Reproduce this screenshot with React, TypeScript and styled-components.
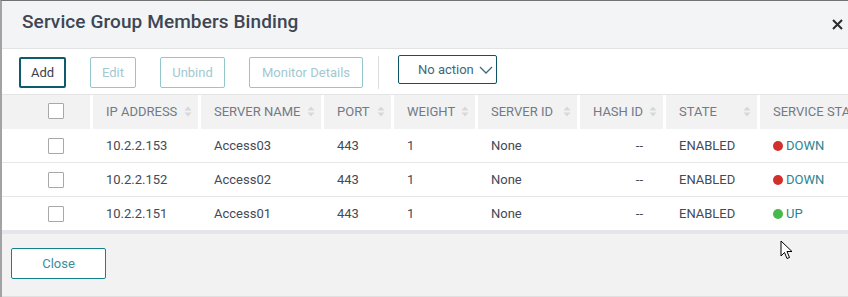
import styled, { createGlobalStyle } from "styled-components";

const GlobalStyle = createGlobalStyle`
  html, body {
    margin: 0;
    padding: 0;
    background: #ffffff;
  }
  body {
    font-family: Roboto, "Liberation Sans", sans-serif;
  }
`;

const COLS = "88px 108px 123px 70px 84px 102px 86px 94px 1fr";

const Dialog = styled.div`
  position: relative;
  width: 848px;
  height: 297px;
  box-sizing: border-box;
  border-top: 1px solid #727272;
  border-left: 2px solid #a3a3a3;
  overflow: hidden;
  display: flex;
  flex-direction: column;
  background: #fff;
`;

const Header = styled.div`
  height: 48px;
  flex: none;
  background: #f3f4f5;
  border-bottom: 1px solid #e2e3e5;
  display: flex;
  align-items: center;
  justify-content: space-between;
  padding: 0 4px 0 20px;
  box-sizing: border-box;
`;

const Title = styled.h1`
  margin: 0 0 7px;
  font-size: 19px;
  font-weight: 500;
  color: #3d4654;
  letter-spacing: 0.1px;
`;

const CloseX = styled.button`
  border: 0;
  background: none;
  padding: 0;
  width: 14px;
  height: 14px;
  display: flex;
  align-items: center;
  justify-content: center;
  cursor: pointer;
`;

const Toolbar = styled.div`
  height: 46px;
  flex: none;
  display: flex;
  align-items: center;
  padding: 2px 0 0 17px;
  box-sizing: border-box;
  border-bottom: 1px solid #e4e4e4;
`;

const ToolButton = styled.button<{ $active?: boolean; $w: number }>`
  width: ${({ $w }) => $w}px;
  height: 31px;
  margin-right: 24px;
  box-sizing: border-box;
  background: #fff;
  border-radius: 2px;
  font-family: Roboto, "Liberation Sans", sans-serif;
  font-size: 13px;
  padding: 0;
  border: ${({ $active }) => ($active ? "2px solid #0e5c6b" : "1px solid #94c6ce")};
  color: ${({ $active }) => ($active ? "#3a404a" : "#a3c8cf")};
`;

const Divider = styled.div`
  width: 1px;
  height: 33px;
  background: #dcdcdc;
  margin: 0 19px 0 -9px;
`;

const ActionSelect = styled.button`
  width: 99px;
  height: 29px;
  margin-top: -6px;
  box-sizing: border-box;
  border: 1.5px solid #0c5565;
  border-radius: 2px;
  background: #fff;
  display: flex;
  align-items: center;
  justify-content: flex-start;
  gap: 5px;
  font-family: Roboto, "Liberation Sans", sans-serif;
  font-size: 13px;
  color: #3a6a7b;
  padding: 0 0 0 19px;
`;

const Table = styled.div`
  flex: none;
  border-bottom: 4px solid #e4e6e9;
`;

const Row = styled.div<{ $head?: boolean }>`
  display: grid;
  grid-template-columns: ${COLS};
  height: ${({ $head }) => ($head ? "34px" : "33px")};
  border-bottom: ${({ $head }) => ($head ? "none" : "1px solid #e6e7e8")};
  background: #fff;
  &:last-child {
    border-bottom: none;
  }
`;

const HeadCell = styled.div<{ $first?: boolean }>`
  background: #f2f2f2;
  border-left: ${({ $first }) => ($first ? "none" : "3px solid #fff")};
  display: flex;
  align-items: center;
  justify-content: space-between;
  padding: 0 6px 2px 13px;
  font-size: 13px;
  color: #737a86;
  white-space: nowrap;
  overflow: hidden;
`;

const Cell = styled.div<{ $right?: boolean }>`
  display: flex;
  align-items: center;
  justify-content: ${({ $right }) => ($right ? "flex-end" : "flex-start")};
  padding: 0 ${({ $right }) => ($right ? "20px" : "0")} 0 16px;
  font-size: 13px;
  color: #434a55;
  white-space: nowrap;
`;

const CheckCell = styled.div<{ $head?: boolean }>`
  display: flex;
  align-items: center;
  padding-left: 46px;
  padding-bottom: ${({ $head }) => ($head ? "2px" : "0")};
  background: ${({ $head }) => ($head ? "#f2f2f2" : "transparent")};
`;

const Check = styled.span`
  width: 16px;
  height: 16px;
  box-sizing: border-box;
  border: 1px solid #a8a8a8;
  border-radius: 1px;
  background: #fff;
`;

const Status = styled.span<{ $up?: boolean }>`
  display: inline-flex;
  align-items: center;
  gap: 3px;
  color: #2a8593;
  &::before {
    content: "";
    width: 10px;
    height: 10px;
    border-radius: 50%;
    background: ${({ $up }) => ($up ? "#46b94d" : "#d2302c")};
  }
`;

const Footer = styled.div`
  flex: 1;
  background: #f2f2f2;
  border-bottom: 1px solid #e0e0e0;
  display: flex;
  align-items: center;
  padding: 0 0 4px 9px;
`;

const CloseButton = styled.button`
  width: 95px;
  height: 31px;
  box-sizing: border-box;
  border: 1.5px solid #17808d;
  border-radius: 2px;
  background: #fff;
  font-family: Roboto, "Liberation Sans", sans-serif;
  font-size: 13px;
  color: #3a8f9b;
`;

const Pointer = styled.svg`
  position: absolute;
  left: 778px;
  top: 239px;
`;

function SortIcon() {
  return (
    <svg width="8" height="11" viewBox="0 0 8 11">
      <path d="M4 0.5 L7.5 4.5 H0.5 Z" fill="#d6d8db" />
      <path d="M4 10.5 L7.5 6.5 H0.5 Z" fill="#d6d8db" />
    </svg>
  );
}

const headers = [
  { label: "IP ADDRESS", sort: true },
  { label: "SERVER NAME", sort: true },
  { label: "PORT", sort: true },
  { label: "WEIGHT", sort: true },
  { label: "SERVER ID", sort: true },
  { label: "HASH ID", sort: true },
  { label: "STATE", sort: true },
  { label: "SERVICE STATE", sort: false },
];

const rows = [
  { ip: "10.2.2.153", name: "Access03", up: false },
  { ip: "10.2.2.152", name: "Access02", up: false },
  { ip: "10.2.2.151", name: "Access01", up: true },
];

export default function App() {
  return (
    <>
      <GlobalStyle />
      <Dialog>
        <Header>
          <Title>Service Group Members Binding</Title>
          <CloseX aria-label="close">
            <svg width="11" height="11" viewBox="0 0 11 11">
              <path d="M1 1 L10 10 M10 1 L1 10" stroke="#2b2b2b" strokeWidth="2" />
            </svg>
          </CloseX>
        </Header>
        <Toolbar>
          <ToolButton $active $w={47}>Add</ToolButton>
          <ToolButton $w={46}>Edit</ToolButton>
          <ToolButton $w={65}>Unbind</ToolButton>
          <ToolButton $w={114}>Monitor Details</ToolButton>
          <Divider />
          <ActionSelect>
            No action
            <svg width="14" height="8" viewBox="0 0 14 8">
              <path d="M1 1 L7 7 L13 1" stroke="#3a6a7b" strokeWidth="1.3" fill="none" />
            </svg>
          </ActionSelect>
        </Toolbar>
        <Table>
          <Row $head>
            <CheckCell $head>
              <Check />
            </CheckCell>
            {headers.map((h) => (
              <HeadCell key={h.label}>
                {h.label}
                {h.sort && <SortIcon />}
              </HeadCell>
            ))}
          </Row>
          {rows.map((r) => (
            <Row key={r.ip}>
              <CheckCell>
                <Check />
              </CheckCell>
              <Cell>{r.ip}</Cell>
              <Cell>{r.name}</Cell>
              <Cell>443</Cell>
              <Cell>1</Cell>
              <Cell>None</Cell>
              <Cell $right>--</Cell>
              <Cell>ENABLED</Cell>
              <Cell>
                <Status $up={r.up}>{r.up ? "UP" : "DOWN"}</Status>
              </Cell>
            </Row>
          ))}
        </Table>
        <Footer>
          <CloseButton>Close</CloseButton>
        </Footer>
        <Pointer width="14" height="21" viewBox="0 0 14 21">
          <path
            d="M1 1 L1 16 L4.5 12.5 L7 18.5 L9.5 17.5 L7 11.5 L12 11.5 Z"
            fill="#fff"
            stroke="#000"
            strokeWidth="1"
            strokeLinejoin="round"
          />
        </Pointer>
      </Dialog>
    </>
  );
}
